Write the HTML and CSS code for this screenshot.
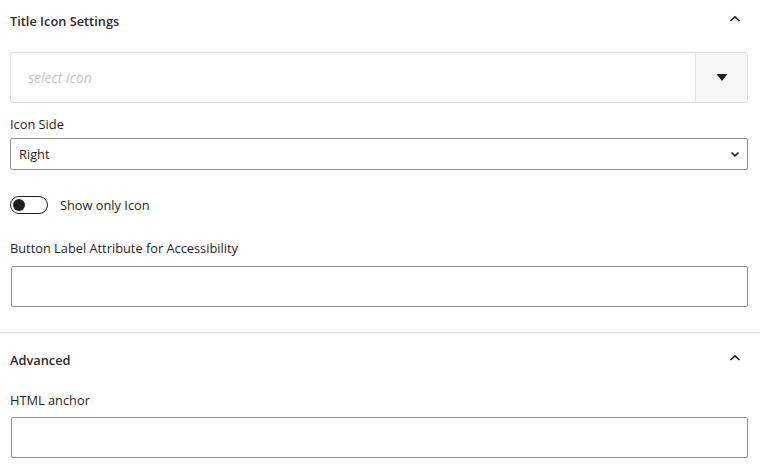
FILE: index.html
```html
<!DOCTYPE html>
<html>
<head>
<meta charset="utf-8">
<link rel="stylesheet" href="styles.css">
</head>
<body>
<div class="panel">
  <section class="section first">
    <div class="header">
      <span class="title">Title Icon Settings</span>
      <svg class="chev" width="14" height="14" viewBox="0 0 14 14"><path d="M2.5 9 L7 4.8 L11.5 9" fill="none" stroke="#1e1e1e" stroke-width="1.6"/></svg>
    </div>
    <div class="picker">
      <span class="placeholder">select icon</span>
      <span class="picker-btn"><svg width="12" height="9" viewBox="0 0 12 9"><path d="M0.5 1 L11.5 1 L6 8 Z" fill="#1e1e1e"/></svg></span>
    </div>
    <div class="label l-side">Icon Side</div>
    <div class="select">
      <span>Right</span>
      <svg width="12" height="12" viewBox="0 0 12 12"><path d="M2.5 4.5 L6 7.8 L9.5 4.5" fill="none" stroke="#1e1e1e" stroke-width="1.6"/></svg>
    </div>
    <div class="toggle-row">
      <span class="toggle"><span class="knob"></span></span>
      <span class="toggle-label">Show only Icon</span>
    </div>
    <div class="label l-btn">Button Label Attribute for Accessibility</div>
    <div class="input"></div>
  </section>
  <section class="section second">
    <div class="header adv">
      <span class="title">Advanced</span>
      <svg class="chev" width="14" height="14" viewBox="0 0 14 14"><path d="M2.5 9 L7 4.8 L11.5 9" fill="none" stroke="#1e1e1e" stroke-width="1.6"/></svg>
    </div>
    <div class="label l-anchor">HTML anchor</div>
    <div class="input"></div>
  </section>
</div>
</body>
</html>
```
FILE: styles.css
```css
html, body {
  margin: 0;
  padding: 0;
  background: #fff;
}
body {
  font-family: "Open Sans", "Noto Sans", sans-serif;
  font-size: 12.8px;
  color: #1e1e1e;
  width: 760px;
  height: 470px;
  overflow: hidden;
}
.section {
  padding: 0 12px 0 10px;
}
.first {
  padding-bottom: 25px;
  border-bottom: 1px solid #e0e0e0;
}
.header {
  display: flex;
  align-items: center;
  justify-content: space-between;
  height: 42px;
  padding-right: 6px;
}
.header.adv {
  height: 54px;
}
.header.adv .chev {
  margin-top: -5px;
}
.title {
  font-weight: 600;
  font-size: 12.8px;
  color: #2a2a2a;
}
.chev {
  display: block;
  margin-top: -4px;
}
.picker {
  margin-top: 10px;
  height: 49px;
  border: 1px solid #dcdcde;
  border-radius: 3px;
  display: flex;
  align-items: center;
  justify-content: space-between;
}
.placeholder {
  font-style: italic;
  color: #c3c4c7;
  font-size: 14px;
  padding-left: 17px;
}
.picker-btn {
  width: 51px;
  height: 100%;
  background: #f6f6f6;
  border-left: 1px solid #e5e5e5;
  display: flex;
  align-items: center;
  justify-content: center;
}
.label {
  line-height: 16px;
}
.l-side {
  margin-top: 13px;
}
.select {
  margin-top: 6px;
  height: 30px;
  border: 1px solid #8c8f94;
  border-radius: 2px;
  display: flex;
  align-items: center;
  justify-content: space-between;
  padding: 0 6px 0 8px;
}
.toggle-row {
  margin-top: 26px;
  display: flex;
  align-items: center;
  gap: 12px;
  height: 18px;
}
.toggle {
  box-sizing: border-box;
  width: 38px;
  height: 18px;
  border: 1.5px solid #1e1e1e;
  border-radius: 9px;
  display: flex;
  align-items: center;
  padding-left: 2px;
}
.knob {
  width: 12px;
  height: 12px;
  border-radius: 50%;
  background: #1e1e1e;
}
.l-btn {
  margin-top: 26px;
}
.input {
  margin-top: 10px;
  margin-left: 1px;
  height: 39px;
  border: 1px solid #8c8f94;
  border-radius: 2px;
}
.l-anchor {
  margin-top: 5px;
}
.second .input {
  margin-top: 9px;
}
```
